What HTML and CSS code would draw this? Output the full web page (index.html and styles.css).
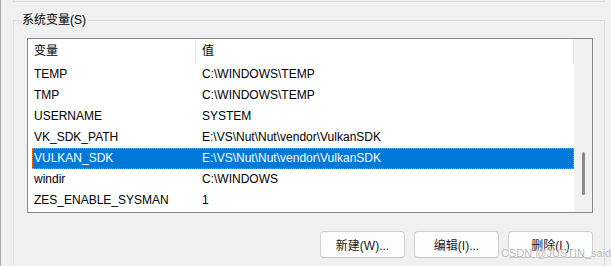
FILE: index.html
```html
<!DOCTYPE html>
<html>
<head>
    <title>环境变量</title>
    <link rel="stylesheet" href="styles.css">
</head>
<body>
    <div class="prev-group"></div>
    <fieldset class="group">
        <legend>系统变量(S)</legend>
        <div class="listbox">
            <div class="list">
                <div class="list-head">
                    <div class="head-cell">变量</div>
                    <div class="head-cell">值</div>
                </div>
                <div class="row"><span>TEMP</span><span>C:\WINDOWS\TEMP</span></div>
                <div class="row"><span>TMP</span><span>C:\WINDOWS\TEMP</span></div>
                <div class="row"><span>USERNAME</span><span>SYSTEM</span></div>
                <div class="row"><span>VK_SDK_PATH</span><span>E:\VS\Nut\Nut\vendor\VulkanSDK</span></div>
                <div class="row selected"><span>VULKAN_SDK</span><span>E:\VS\Nut\Nut\vendor\VulkanSDK</span></div>
                <div class="row"><span>windir</span><span>C:\WINDOWS</span></div>
                <div class="row"><span>ZES_ENABLE_SYSMAN</span><span>1</span></div>
            </div>
            <div class="scrollbar"><div class="thumb"></div></div>
        </div>
        <div class="buttons">
            <button class="btn">新建(W)...</button>
            <button class="btn">编辑(I)...</button>
            <button class="btn">删除(L)</button>
        </div>
    </fieldset>
    <div class="watermark">CSDN @JUSTIN_said</div>
</body>
</html>
```
FILE: styles.css
```css
html {
    background-color: #f0f0f0;
    height: 266px;
    overflow: hidden;
}
body {
    margin: 0;
    height: 266px;
    border-left: 1px solid #a9a9a9;
    font-family: "Liberation Sans", "Noto Sans CJK SC", sans-serif;
    font-size: 12px;
    color: #000;
    position: relative;
}
.prev-group {
    margin-left: 12px;
    width: 592px;
    height: 2px;
    box-sizing: border-box;
    border: 1px solid #dcdcdc;
    border-top: none;
}
.group {
    margin: 10px 0 0 12px;
    padding: 0;
    width: 592px;
    height: 300px;
    box-sizing: border-box;
    border: 1px solid #dcdcdc;
}
.group legend {
    margin-left: 6px;
    padding: 0 2px;
    line-height: 16px;
}
.listbox {
    display: flex;
    margin: 10px 0 0 13px;
    width: 566px;
    height: 175px;
    box-sizing: border-box;
    border: 1px solid #828790;
    background-color: #ffffff;
}
.list {
    width: 546px;
}
.list-head {
    display: grid;
    grid-template-columns: 168px 1fr;
    height: 25px;
}
.head-cell {
    padding: 1px 0 0 6px;
    line-height: 23px;
}
.head-cell:first-child {
    border-right: 1px solid #e5e5e5;
}
.head-cell:last-child {
    border-right: 1px solid #e5e5e5;
}
.row {
    display: grid;
    grid-template-columns: 168px 1fr;
    margin-left: 4px;
    height: 21px;
    line-height: 21px;
    white-space: nowrap;
}
.row span {
    padding-left: 2px;
}
.row.selected {
    background-color: #0078d7;
    color: #ffffff;
    outline: 1px dotted #ff8728;
    outline-offset: -1px;
}
.scrollbar {
    width: 18px;
    background-color: #f0f0f0;
    border-left: 1px solid #f4f4f4;
    box-sizing: border-box;
}
.thumb {
    margin: 113px 0 0 7px;
    width: 3px;
    height: 43px;
    border-radius: 2px;
    background-color: #8a8a8a;
}
.buttons {
    display: flex;
    justify-content: flex-end;
    gap: 9px;
    margin: 18px 0 0 13px;
    width: 566px;
}
.btn {
    width: 85px;
    height: 27px;
    padding: 0;
    border: 1px solid #d0d0d0;
    border-bottom-color: #c2c2c2;
    border-radius: 4px;
    background-color: #fdfdfd;
    font-family: "Liberation Sans", "Noto Sans CJK SC", sans-serif;
    font-size: 12px;
    color: #1b1b1b;
}
.watermark {
    position: absolute;
    left: 500px;
    top: 247px;
    font-family: "Liberation Sans", sans-serif;
    font-size: 11px;
    line-height: 13px;
    color: rgba(160, 160, 160, 0.75);
    text-shadow: 0 0 1px #ffffff, 0 0 1px #ffffff;
    white-space: nowrap;
}
```
